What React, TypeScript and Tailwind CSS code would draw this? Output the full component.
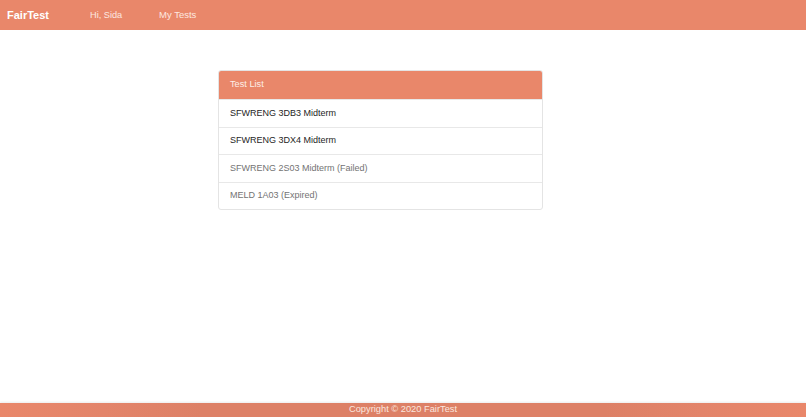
const tests = [
  { name: 'SFWRENG 3DB3 Midterm', active: true },
  { name: 'SFWRENG 3DX4 Midterm', active: true },
  { name: 'SFWRENG 2S03 Midterm (Failed)', active: false },
  { name: 'MELD 1A03 (Expired)', active: false },
];

export default function App() {
  return (
    <div className="flex h-[417px] flex-col bg-white font-['Liberation_Sans',Arial,sans-serif]">
      {/* top nav */}
      <nav className="flex h-[30px] shrink-0 items-center bg-[#e9876a] pl-[7px] pt-[1px] text-white">
        <span className="w-[83px] text-[11px] font-bold">FairTest</span>
        <span className="w-[69px] text-[9.2px] text-[#fde8e0]">Hi, Sida</span>
        <span className="text-[9.5px] text-[#fde8e0]">My Tests</span>
      </nav>

      <main className="flex-1 pl-[218px] pt-[40px]">
        <div className="w-[325px] overflow-hidden rounded-[3px] border border-[#e4e4e4]">
          <div className="flex h-[28px] items-center bg-[#e9876a] px-[11px] text-[9.2px] text-[#fdeee8]">
            Test List
          </div>
          {tests.map((t) => (
            <div
              key={t.name}
              className={`flex h-[27.5px] items-center border-t border-[#e8e8e8] px-[11px] text-[9px] ${
                t.active ? 'text-[#1e1e1e]' : 'text-[#737373]'
              }`}
            >
              {t.name}
            </div>
          ))}
        </div>
      </main>

      <footer className="flex h-[14px] shrink-0 items-center justify-center bg-[linear-gradient(to_right,#e9876a,#e3846a_13%,#dd8066_25%,#dd8066_75%,#e3846a_87%,#e9876a)] text-[9.3px] text-[#fbe6de] shadow-[0_-1px_2px_rgba(0,0,0,0.08)]">
        Copyright © 2020 FairTest
      </footer>
    </div>
  );
}
